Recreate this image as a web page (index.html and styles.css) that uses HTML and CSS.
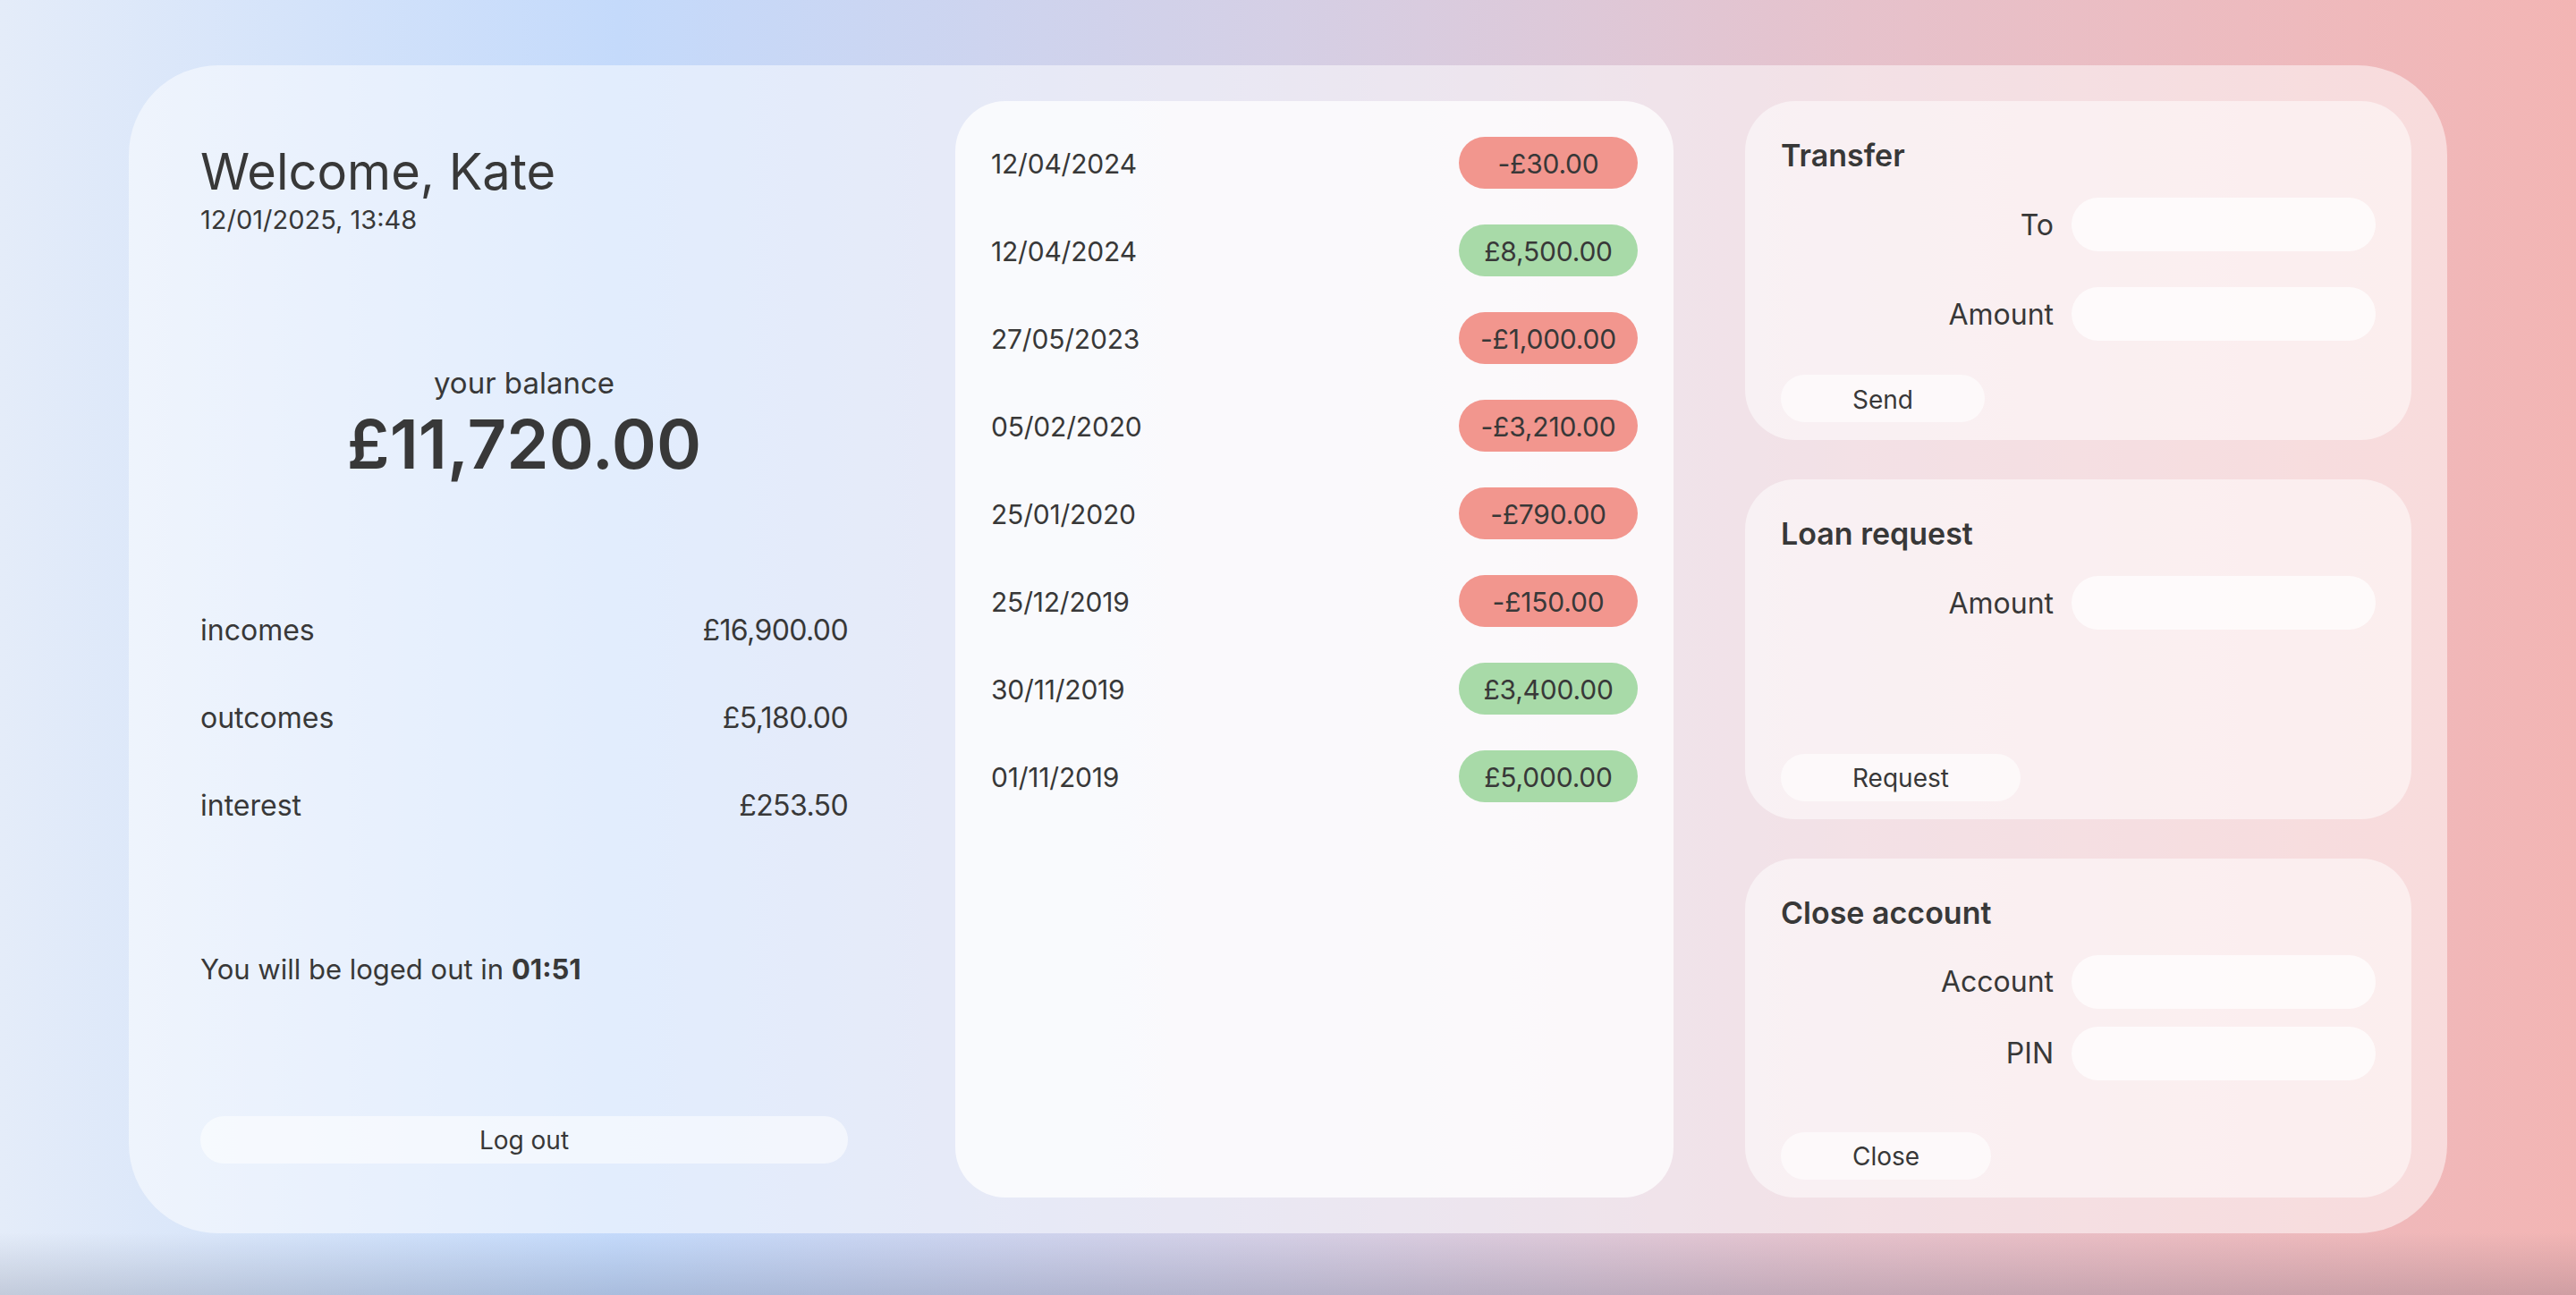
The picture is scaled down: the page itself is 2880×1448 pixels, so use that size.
FILE: index.html
```html
<!DOCTYPE html>
<html lang="en">
<head>
<meta charset="utf-8">
<title>Bank</title>
<link rel="stylesheet" href="styles.css">
</head>
<body>
<main class="app">
  <section class="summary">
    <h1 class="welcome">Welcome, Kate</h1>
    <p class="now">12/01/2025, 13:48</p>
    <div class="balance">
      <p class="balance-label">your balance</p>
      <p class="balance-value">£11,720.00</p>
    </div>
    <ul class="stats">
      <li class="stat"><span>incomes</span><span class="num">£16,900.00</span></li>
      <li class="stat"><span>outcomes</span><span class="num">£5,180.00</span></li>
      <li class="stat"><span>interest</span><span class="num">£253.50</span></li>
    </ul>
    <p class="timer">You will be loged out in <b>01:51</b></p>
    <button class="logout">Log out</button>
  </section>

  <section class="movements">
    <div class="move"><span class="date">12/04/2024</span><span class="pill out">-£30.00</span></div>
    <div class="move"><span class="date">12/04/2024</span><span class="pill in">£8,500.00</span></div>
    <div class="move"><span class="date">27/05/2023</span><span class="pill out">-£1,000.00</span></div>
    <div class="move"><span class="date">05/02/2020</span><span class="pill out">-£3,210.00</span></div>
    <div class="move"><span class="date">25/01/2020</span><span class="pill out">-£790.00</span></div>
    <div class="move"><span class="date">25/12/2019</span><span class="pill out">-£150.00</span></div>
    <div class="move"><span class="date">30/11/2019</span><span class="pill in">£3,400.00</span></div>
    <div class="move"><span class="date">01/11/2019</span><span class="pill in">£5,000.00</span></div>
  </section>

  <section class="actions">
    <form class="op">
      <h2 class="op-title">Transfer</h2>
      <div class="fields wide">
        <label class="field"><span class="field-label">To</span><input class="field-input" type="text"></label>
        <label class="field"><span class="field-label">Amount</span><input class="field-input" type="text"></label>
      </div>
      <button class="op-btn" type="button">Send</button>
    </form>
    <form class="op">
      <h2 class="op-title">Loan request</h2>
      <div class="fields">
        <label class="field"><span class="field-label">Amount</span><input class="field-input" type="text"></label>
      </div>
      <button class="op-btn" type="button">Request</button>
    </form>
    <form class="op">
      <h2 class="op-title">Close account</h2>
      <div class="fields">
        <label class="field"><span class="field-label">Account</span><input class="field-input" type="text"></label>
        <label class="field"><span class="field-label">PIN</span><input class="field-input" type="password"></label>
      </div>
      <button class="op-btn" type="button">Close</button>
    </form>
  </section>
</main>
</body>
</html>
```
FILE: styles.css
```css
* { box-sizing: border-box; }

html, body { height: 100%; }

body {
  margin: 0;
  padding-top: 73px;
  font-family: Inter, "Noto Sans", "DejaVu Sans", sans-serif;
  color: #383838;
  background:
    linear-gradient(180deg, rgba(0,0,0,0) calc(100% - 70px), rgba(45,55,85,0.18) 100%),
    linear-gradient(90deg, #e4ecf9 0%, #c4dafb 24%, #d5cfe5 50%, #e6c2cc 72%, #f3b5b4 100%);
  overflow: hidden;
}

.app {
  width: 2592px;
  height: 1306px;
  margin: 0 auto;
  padding: 40px;
  border-radius: 100px;
  background: rgba(255,255,255,0.5);
  display: grid;
  grid-template-columns: 804px 803px 1fr;
  column-gap: 80px;
}

/* summary column */
.summary {
  padding: 43px 40px 38px;
  display: flex;
  flex-direction: column;
}
.welcome {
  margin: 0;
  font-size: 56px;
  font-weight: 400;
  line-height: 72px;
}
.now {
  margin: 0;
  font-size: 29px;
  line-height: 36px;
}
.balance {
  margin-top: 144px;
  text-align: center;
}
.balance-label {
  margin: 0;
  font-size: 33px;
  line-height: 40px;
}
.balance-value {
  margin: 3px 0 0;
  font-size: 76px;
  font-weight: 600;
  line-height: 90px;
}
.stats {
  list-style: none;
  margin: 144px 0 0;
  padding: 0;
  display: flex;
  flex-direction: column;
  gap: 58px;
}
.stat {
  display: flex;
  justify-content: space-between;
  font-size: 32px;
  line-height: 40px;
}
.num { letter-spacing: -0.6px; }
.timer {
  margin: 143px 0 0;
  font-size: 31px;
  line-height: 40px;
}
.timer b { font-weight: 700; }
.logout {
  margin-top: auto;
  height: 53px;
  border: none;
  border-radius: 27px;
  background: rgba(255,255,255,0.55);
  font: inherit;
  font-size: 28px;
  color: #383838;
}

/* movements */
.movements {
  background: rgba(255,255,255,0.75);
  border-radius: 56px;
  padding: 40px;
  display: flex;
  flex-direction: column;
  gap: 40px;
}
.move {
  height: 58px;
  display: flex;
  align-items: center;
  justify-content: space-between;
}
.date {
  font-size: 30px;
  letter-spacing: -0.2px;
  padding-top: 2px;
}
.pill {
  width: 200px;
  height: 58px;
  border-radius: 29px;
  display: flex;
  align-items: center;
  justify-content: center;
  font-size: 30px;
  letter-spacing: -0.2px;
  padding-top: 2px;
}
.pill.out { background: #f2968e; }
.pill.in { background: #a8daa8; }

/* actions */
.actions {
  display: flex;
  flex-direction: column;
  gap: 44px;
}
.op {
  flex: 1;
  margin: 0;
  background: rgba(255,255,255,0.5);
  border-radius: 56px;
  padding: 41px 40px 20px;
  display: flex;
  flex-direction: column;
}
.op-title {
  margin: 0;
  font-size: 34px;
  font-weight: 600;
  line-height: 40px;
}
.fields {
  margin-top: 27px;
  display: flex;
  flex-direction: column;
  gap: 20px;
}
.fields.wide { gap: 40px; }
.field {
  display: flex;
  align-items: center;
  gap: 20px;
}
.field-label {
  flex: 1;
  text-align: right;
  font-size: 32px;
}
.field-input {
  width: 340px;
  height: 60px;
  border: none;
  border-radius: 30px;
  background: rgba(255,255,255,0.7);
  outline: none;
  padding: 0 24px;
  font: inherit;
  font-size: 28px;
}
.op-btn {
  margin-top: auto;
  align-self: flex-start;
  height: 53px;
  padding: 2px 80px 0;
  border: none;
  border-radius: 27px;
  background: rgba(255,255,255,0.6);
  font: inherit;
  font-size: 28px;
  color: #383838;
}
```
